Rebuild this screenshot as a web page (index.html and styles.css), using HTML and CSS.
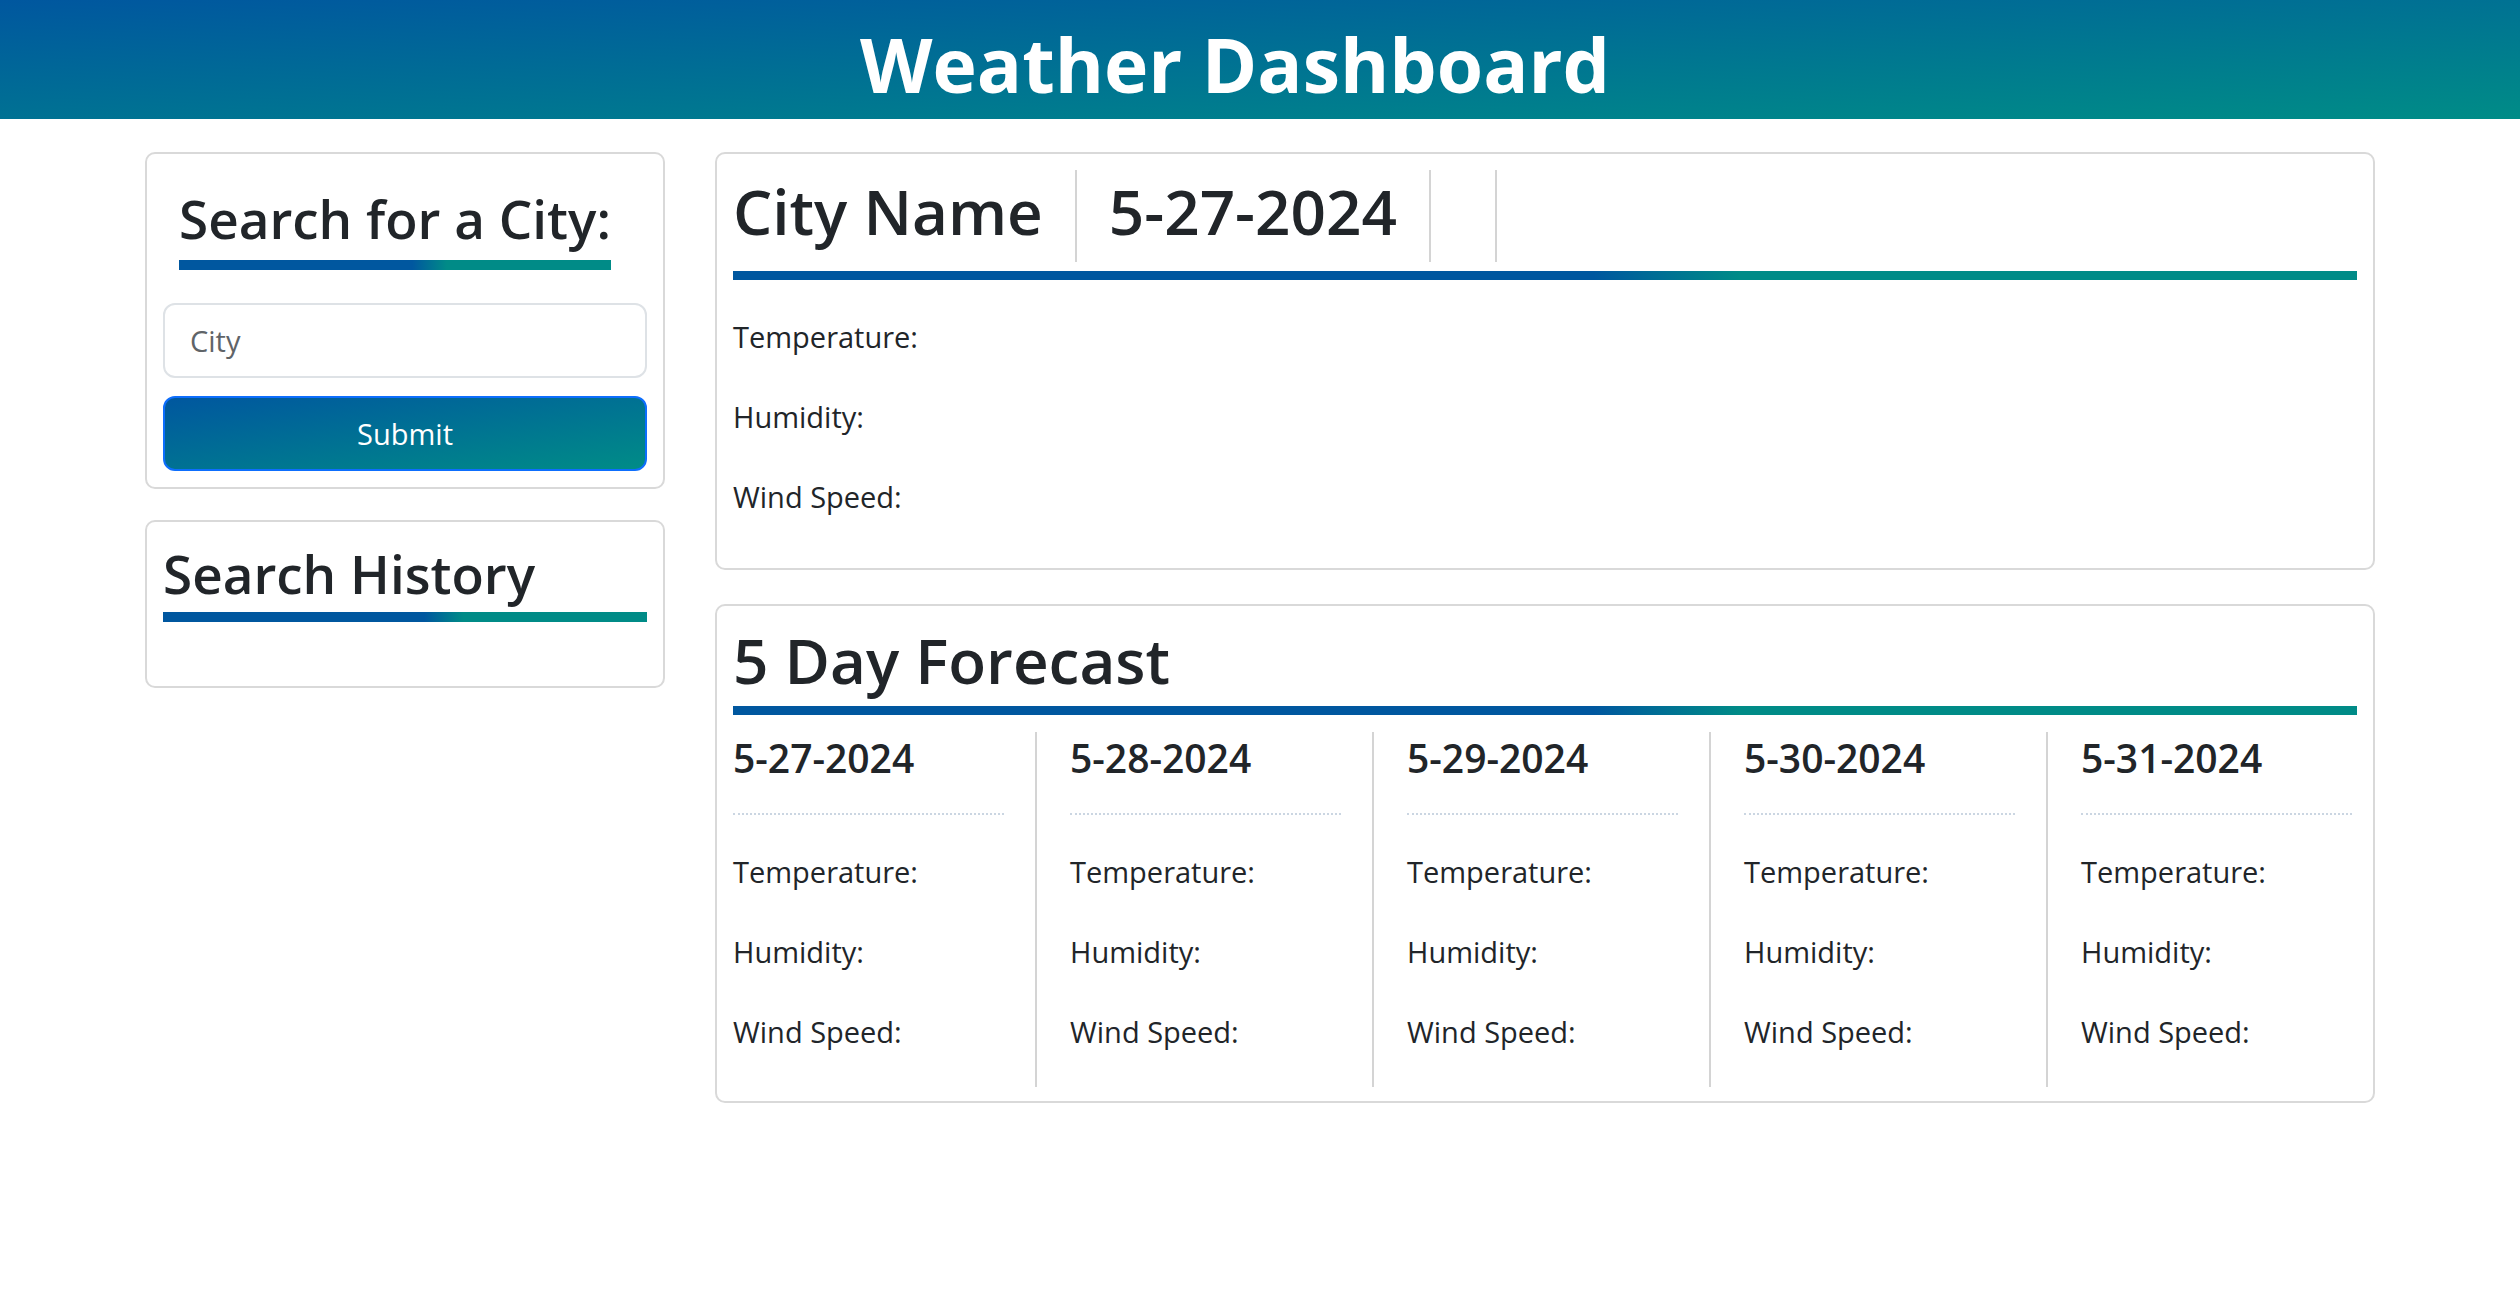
FILE: index.html
```html
<!DOCTYPE html>
<html lang="en">
<head>
<meta charset="utf-8">
<title>Weather Dashboard</title>
<link rel="stylesheet" href="styles.css">
</head>
<body>
<header class="site-header">
  <h1 class="site-title">Weather Dashboard</h1>
</header>
<main class="layout">
  <aside class="sidebar">
    <section class="card search-card">
      <h2 class="section-title search-title">Search for a City:</h2>
      <input class="city-input" type="text" placeholder="City">
      <button class="submit-btn" type="button">Submit</button>
    </section>
    <section class="card history-card">
      <h2 class="section-title history-title">Search History</h2>
      <ul class="history-list"></ul>
    </section>
  </aside>
  <div class="content">
    <section class="card current-card">
      <div class="current-head">
        <h1 class="head-item">City Name</h1>
        <h1 class="head-item">5-27-2024</h1>
        <span class="head-item icon-slot"></span>
      </div>
      <div class="grad-bar"></div>
      <div class="stats">
        <p class="stat">Temperature:</p>
        <p class="stat">Humidity:</p>
        <p class="stat">Wind Speed:</p>
      </div>
    </section>
    <section class="card forecast-card">
      <h1 class="forecast-title">5 Day Forecast</h1>
      <div class="grad-bar forecast-bar"></div>
      <div class="forecast-row">
        <div class="day">
          <h4 class="day-date">5-27-2024</h4>
          <div class="day-stats"><p class="stat">Temperature:</p><p class="stat">Humidity:</p><p class="stat">Wind Speed:</p></div>
        </div>
        <div class="day">
          <h4 class="day-date">5-28-2024</h4>
          <div class="day-stats"><p class="stat">Temperature:</p><p class="stat">Humidity:</p><p class="stat">Wind Speed:</p></div>
        </div>
        <div class="day">
          <h4 class="day-date">5-29-2024</h4>
          <div class="day-stats"><p class="stat">Temperature:</p><p class="stat">Humidity:</p><p class="stat">Wind Speed:</p></div>
        </div>
        <div class="day">
          <h4 class="day-date">5-30-2024</h4>
          <div class="day-stats"><p class="stat">Temperature:</p><p class="stat">Humidity:</p><p class="stat">Wind Speed:</p></div>
        </div>
        <div class="day">
          <h4 class="day-date">5-31-2024</h4>
          <div class="day-stats"><p class="stat">Temperature:</p><p class="stat">Humidity:</p><p class="stat">Wind Speed:</p></div>
        </div>
      </div>
    </section>
  </div>
</main>
</body>
</html>
```
FILE: styles.css
```css
* { box-sizing: border-box; }

body {
  margin: 0;
  font-family: "Open Sans", "Noto Sans", sans-serif;
  color: #212529;
  background: #ffffff;
}

.site-header {
  height: 119px;
  padding: 10px 50px 0 0;
  background: linear-gradient(to bottom right, #00579f, #008c87);
  text-align: center;
}

.site-title {
  margin: 0;
  font-size: 75px;
  font-weight: 700;
  line-height: 109px;
  color: #ffffff;
}

.layout {
  display: flex;
  gap: 50px;
  padding: 33px 0 0 145px;
}

.sidebar {
  width: 520px;
  display: flex;
  flex-direction: column;
  gap: 31px;
}

.content {
  width: 1660px;
  display: flex;
  flex-direction: column;
  gap: 34px;
}

.card {
  border: 2px solid #d9d9d9;
  border-radius: 10px;
  padding: 16px;
  background: #fff;
}

.section-title {
  font-size: 53px;
  font-weight: 600;
  line-height: 66px;
  background: linear-gradient(to right, #00579f 54%, #008b87 62%) left bottom / 100% 10px no-repeat;
}

.search-title {
  width: fit-content;
  margin: 16px 0 33px 16px;
  padding-bottom: 18px;
}

.history-title {
  margin: 3px 0 0 0;
  padding-bottom: 15px;
}

.history-list {
  margin: 0;
  padding: 0;
  list-style: none;
  height: 48px;
}

.city-input {
  display: block;
  width: 100%;
  height: 75px;
  padding: 0 25px;
  border: 2px solid #dee2e6;
  border-radius: 12px;
  font-family: inherit;
  font-size: 29px;
  color: #212529;
  outline: none;
}

.city-input::placeholder { color: #5f6468; }

.submit-btn {
  display: block;
  width: 100%;
  height: 75px;
  margin-top: 18px;
  border: 2px solid #0d6efd;
  border-radius: 12px;
  background: linear-gradient(to bottom right, #00579f, #008c87);
  color: #ffffff;
  font-family: inherit;
  font-size: 29px;
}

.current-head {
  display: flex;
  height: 92px;
}

.head-item {
  margin: 0;
  height: 92px;
  padding: 3px 32px 0 32px;
  border-right: 2px solid #d4d4d4;
  font-size: 62px;
  font-weight: 600;
  line-height: 77px;
}

.head-item:first-child { padding-left: 0; }

.icon-slot { padding: 0 32px; }

.grad-bar {
  height: 9px;
  margin-top: 9px;
  background: linear-gradient(to right, #00579f 53%, #008b87 62%);
}

.stats {
  display: flex;
  flex-direction: column;
  gap: 38px;
  padding: 36px 0 34px 0;
}

.stat {
  margin: 0;
  font-size: 29px;
  line-height: 42px;
}

.forecast-card { padding-bottom: 14px; }

.forecast-title {
  margin: 0;
  font-size: 62px;
  font-weight: 600;
  line-height: 77px;
}

.forecast-bar { margin-top: 7px; }

.forecast-row {
  display: flex;
  margin-top: 17px;
}

.day {
  width: 337px;
  flex: none;
  padding: 0 31px 0 33px;
  border-left: 2px solid #d4d4d4;
}

.day:first-child {
  width: 302px;
  padding-left: 0;
  border-left: none;
}

.day:last-child {
  width: 306px;
  padding-right: 0;
}

.day-date {
  margin: 0;
  padding: 2px 0 31px 0;
  border-bottom: 2px dotted #cbd6e2;
  font-size: 39px;
  font-weight: 600;
  line-height: 48px;
}

.day-stats {
  display: flex;
  flex-direction: column;
  gap: 38px;
  padding: 36px 0 34px 0;
}
```
